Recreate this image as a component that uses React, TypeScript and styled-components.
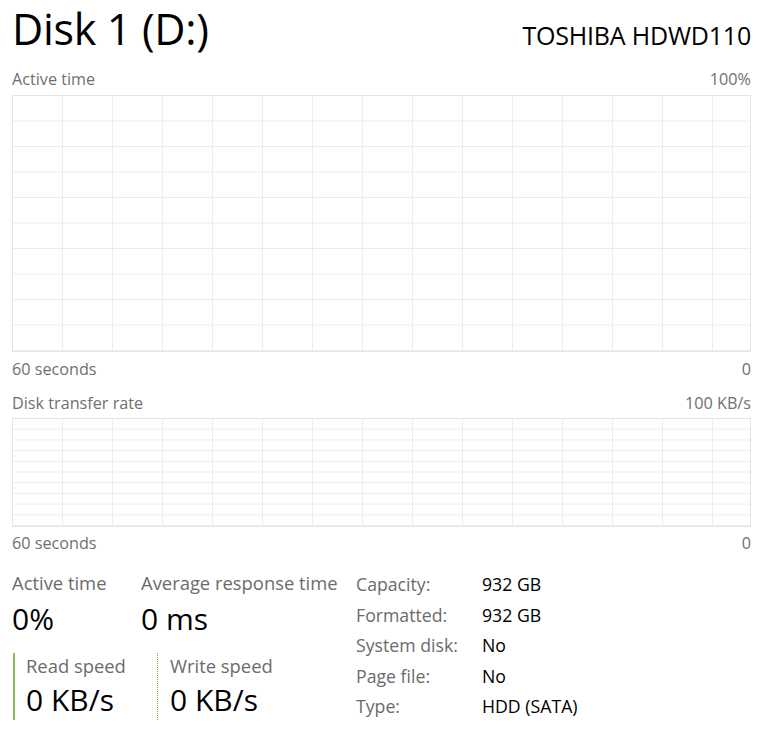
import React from "react";
import styled, { createGlobalStyle } from "styled-components";

const GlobalStyle = createGlobalStyle`
  html, body { margin: 0; padding: 0; background: #ffffff; }
  body { font-family: "Open Sans", "Noto Sans", sans-serif; color: #000; }
  * { box-sizing: border-box; }
`;

const Page = styled.div`
  width: 768px;
  height: 738px;
  padding: 3px 17px 0 12px;
  background: #fff;
  overflow: hidden;
`;

const Header = styled.div`
  display: flex;
  justify-content: space-between;
  align-items: baseline;
  height: 52px;
`;

const Title = styled.div`
  font-size: 43px;
  line-height: 52px;
  color: #000;
  letter-spacing: -0.3px;
`;

const Model = styled.div`
  font-size: 25px;
  line-height: 52px;
  color: #000;
  letter-spacing: -0.2px;
`;

const LabelRow = styled.div<{ $mt: number }>`
  display: flex;
  justify-content: space-between;
  margin-top: ${(p) => p.$mt}px;
  font-size: 16.2px;
  line-height: 22px;
  height: 22px;
  color: #707070;
`;

const ChartBox = styled.div<{ $h: number; $mt: number }>`
  margin-top: ${(p) => p.$mt}px;
  height: ${(p) => p.$h}px;
  border: 1px solid #e4e4e4;
  background: #fff;
  svg { display: block; width: 100%; height: 100%; }
`;

function Chart({ h, mt, id }: { h: number; mt: number; id: string }) {
  const inner = h - 2;
  const rowH = inner / 10;
  return (
    <ChartBox $h={h} $mt={mt}>
      <svg shapeRendering="crispEdges">
        <defs>
          <pattern id={`v-${id}`} x="0" y="0" width="50" height={inner} patternUnits="userSpaceOnUse">
            <line x1="49.5" y1="0" x2="49.5" y2={inner} stroke="#ececec" strokeWidth="1" />
          </pattern>
          <pattern id={`h-${id}`} x="0" y="0" width="50" height={rowH} patternUnits="userSpaceOnUse">
            <line x1="0" y1={rowH - 0.5} x2="50" y2={rowH - 0.5} stroke="#ececec" strokeWidth="1" />
          </pattern>
        </defs>
        <rect width="100%" height="100%" fill={`url(#h-${id})`} />
        <rect width="100%" height="100%" fill={`url(#v-${id})`} />
      </svg>
    </ChartBox>
  );
}

const Stats = styled.div`
  margin-top: 16px;
  display: flex;
`;

const LeftStats = styled.div`
  width: 344px;
  padding-top: 1px;
  display: flex;
  flex-direction: column;
`;

const TopStats = styled.div`
  display: grid;
  grid-template-columns: 129px 1fr;
`;

const StatLabel = styled.div`
  font-size: 18.4px;
  line-height: 24px;
  color: #6b6b6b;
  white-space: nowrap;
`;

const StatValue = styled.div<{ $mt: number }>`
  margin-top: ${(p) => p.$mt}px;
  font-size: 30px;
  line-height: 40px;
  color: #000;
  white-space: nowrap;
`;

const SpeedRow = styled.div`
  margin-top: 14px;
  display: grid;
  grid-template-columns: 144px 1fr;
  margin-left: 1px;
`;

const SpeedPanel = styled.div<{ $dotted?: boolean }>`
  border-left: ${(p) => (p.$dotted ? "1px dotted #6fb83a" : "2px solid #86c05a")};
  padding-left: ${(p) => (p.$dotted ? 12 : 11)}px;
  padding-top: 1px;
  height: 67px;
`;

const InfoTable = styled.div`
  display: grid;
  grid-template-columns: 126px 1fr;
  font-size: 17.7px;
  line-height: 30.5px;
  margin-top: -1px;
`;

const InfoKey = styled.div`
  color: #6b6b6b;
  white-space: nowrap;
`;

const InfoVal = styled.div`
  color: #000;
  white-space: nowrap;
`;

const info: [string, string][] = [
  ["Capacity:", "932 GB"],
  ["Formatted:", "932 GB"],
  ["System disk:", "No"],
  ["Page file:", "No"],
  ["Type:", "HDD (SATA)"],
];

export default function App() {
  return (
    <>
      <GlobalStyle />
      <Page>
        <Header>
          <Title>Disk 1 (D:)</Title>
          <Model>TOSHIBA HDWD110</Model>
        </Header>
        <LabelRow $mt={13}>
          <span>Active time</span>
          <span>100%</span>
        </LabelRow>
        <Chart h={257} mt={5} id="a" />
        <LabelRow $mt={6}>
          <span>60 seconds</span>
          <span>0</span>
        </LabelRow>
        <LabelRow $mt={12}>
          <span>Disk transfer rate</span>
          <span>100 KB/s</span>
        </LabelRow>
        <Chart h={109} mt={4} id="b" />
        <LabelRow $mt={5}>
          <span>60 seconds</span>
          <span>0</span>
        </LabelRow>
        <Stats>
          <LeftStats>
            <TopStats>
              <div>
                <StatLabel>Active time</StatLabel>
                <StatValue $mt={4}>0%</StatValue>
              </div>
              <div>
                <StatLabel>Average response time</StatLabel>
                <StatValue $mt={4}>0 ms</StatValue>
              </div>
            </TopStats>
            <SpeedRow>
              <SpeedPanel>
                <StatLabel>Read speed</StatLabel>
                <StatValue $mt={2}>0 KB/s</StatValue>
              </SpeedPanel>
              <SpeedPanel $dotted>
                <StatLabel>Write speed</StatLabel>
                <StatValue $mt={2}>0 KB/s</StatValue>
              </SpeedPanel>
            </SpeedRow>
          </LeftStats>
          <InfoTable>
            {info.map(([k, v]) => (
              <React.Fragment key={k}>
                <InfoKey>{k}</InfoKey>
                <InfoVal>{v}</InfoVal>
              </React.Fragment>
            ))}
          </InfoTable>
        </Stats>
      </Page>
    </>
  );
}
